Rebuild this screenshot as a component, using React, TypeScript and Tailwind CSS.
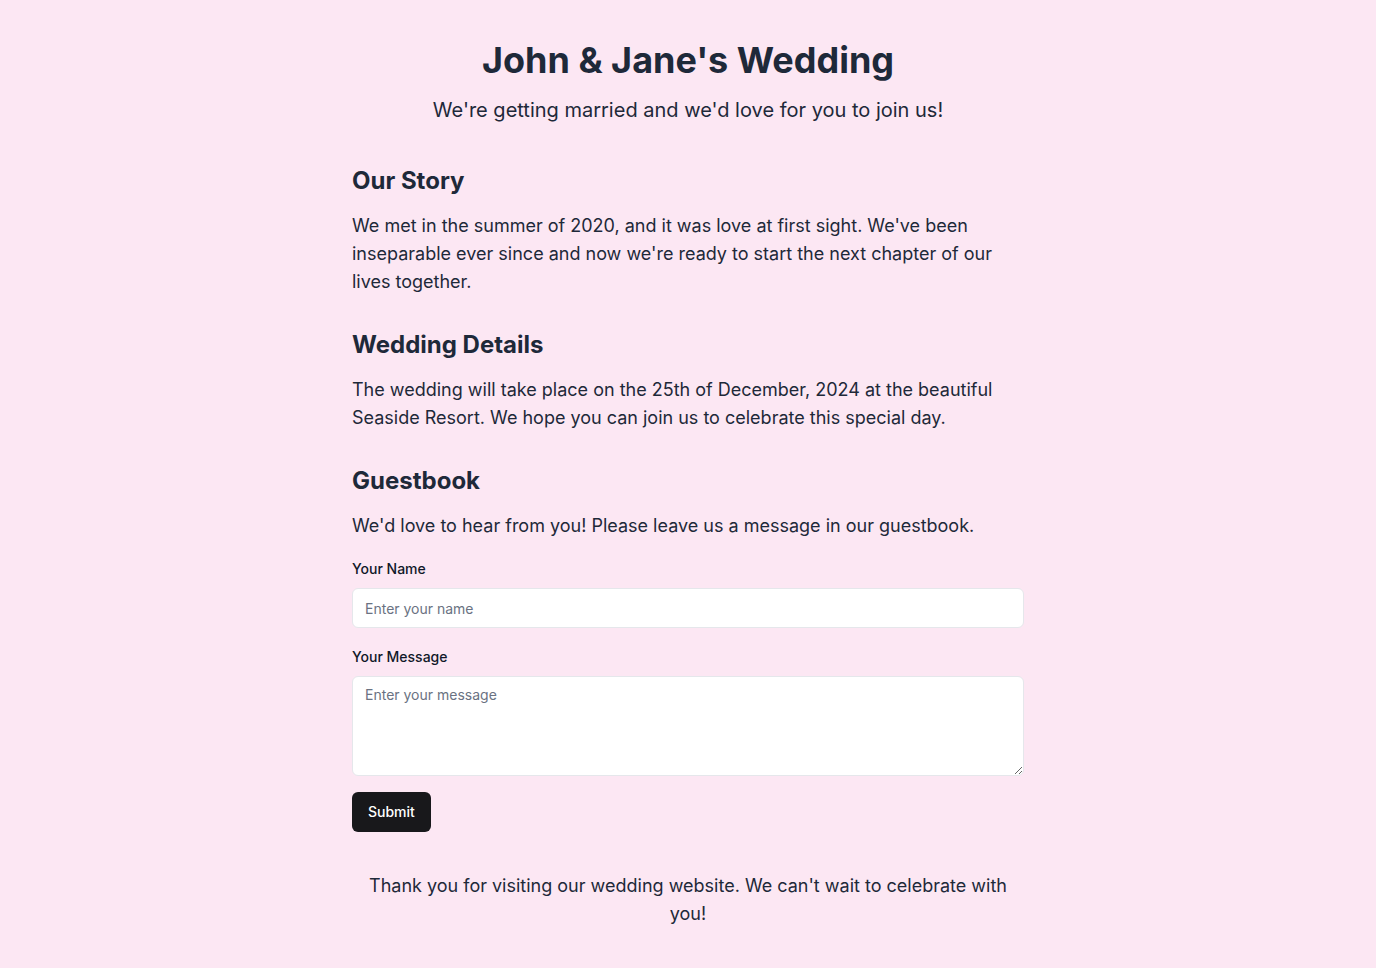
import React from 'react';

const App: React.FC = () => {
  return (
    <div className="min-h-screen bg-pink-100 text-gray-800" style={{ fontFamily: 'Inter, "Noto Sans", sans-serif' }}>
      <div className="max-w-2xl mx-auto pt-10 pb-10">
        <header className="text-center">
          <h1 className="text-4xl font-bold">John &amp; Jane's Wedding</h1>
          <p className="text-xl mt-4">We're getting married and we'd love for you to join us!</p>
        </header>

        <section className="mt-[41px]">
          <h2 className="text-2xl font-bold">Our Story</h2>
          <p className="text-lg mt-[15px]">
            We met in the summer of 2020, and it was love at first sight. We've been inseparable ever since and now we're ready to start the next chapter of our lives together.
          </p>
        </section>

        <section className="mt-[33px]">
          <h2 className="text-2xl font-bold">Wedding Details</h2>
          <p className="text-lg mt-[15px]">
            The wedding will take place on the 25th of December, 2024 at the beautiful Seaside Resort. We hope you can join us to celebrate this special day.
          </p>
        </section>

        <section className="mt-[33px]">
          <h2 className="text-2xl font-bold">Guestbook</h2>
          <p className="text-lg mt-[15px]">We'd love to hear from you! Please leave us a message in our guestbook.</p>
          <form className="mt-[19px]" onSubmit={(e) => e.preventDefault()}>
            <label htmlFor="name" className="block text-sm font-medium text-gray-900">Your Name</label>
            <input
              id="name"
              type="text"
              placeholder="Enter your name"
              className="mt-[9px] w-full h-10 px-3 text-sm bg-white border border-gray-200 rounded-md placeholder:text-gray-500 outline-none"
            />
            <label htmlFor="message" className="block text-sm font-medium text-gray-900 mt-[19px]">Your Message</label>
            <textarea
              id="message"
              placeholder="Enter your message"
              className="mt-[9px] block w-full h-[100px] px-3 py-2 text-sm bg-white border border-gray-200 rounded-md placeholder:text-gray-500 outline-none"
            />
            <button type="submit" className="mt-4 h-10 px-4 bg-zinc-900 text-white text-sm font-medium rounded-md">
              Submit
            </button>
          </form>
        </section>

        <footer className="mt-10 text-center">
          <p className="text-lg">Thank you for visiting our wedding website. We can't wait to celebrate with you!</p>
        </footer>
      </div>
    </div>
  );
};

export default App;
